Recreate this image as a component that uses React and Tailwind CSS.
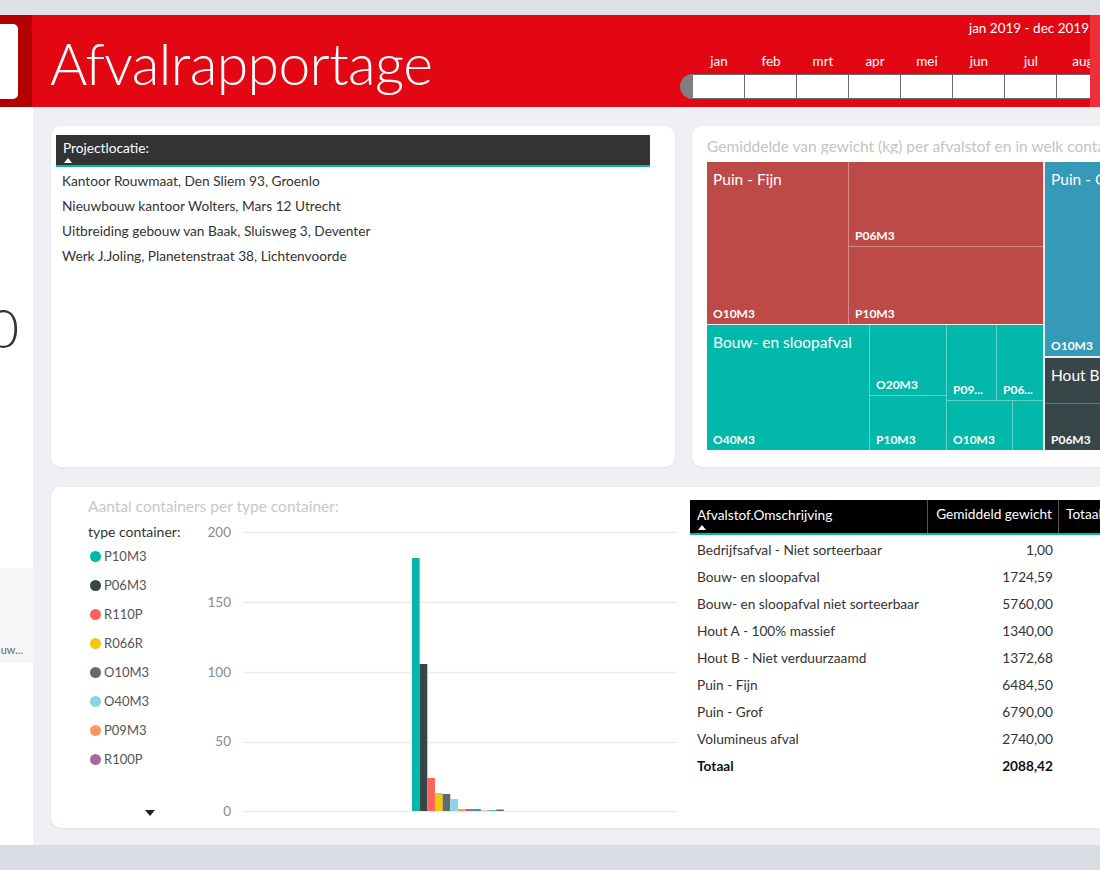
import React from "react";

const months = ["jan", "feb", "mrt", "apr", "mei", "jun", "jul", "aug"];

const locations = [
  "Kantoor Rouwmaat, Den Sliem 93, Groenlo",
  "Nieuwbouw kantoor Wolters, Mars 12 Utrecht",
  "Uitbreiding gebouw van Baak, Sluisweg 3, Deventer",
  "Werk J.Joling, Planetenstraat 38, Lichtenvoorde",
];

const legend = [
  { name: "P10M3", dot: "bg-[#01b8aa]" },
  { name: "P06M3", dot: "bg-[#374649]" },
  { name: "R110P", dot: "bg-[#fd625e]" },
  { name: "R066R", dot: "bg-[#f2c80f]" },
  { name: "O10M3", dot: "bg-[#5f6b6d]" },
  { name: "O40M3", dot: "bg-[#8ad4eb]" },
  { name: "P09M3", dot: "bg-[#fe9666]" },
  { name: "R100P", dot: "bg-[#a66999]" },
];

// bar heights in px (1.4px per container)
const bars = [
  { h: 253, fill: "#01b8aa" },
  { h: 147, fill: "#374649" },
  { h: 33, fill: "#fd625e" },
  { h: 18, fill: "#f2c80f" },
  { h: 17, fill: "#5f6b6d" },
  { h: 12, fill: "#8ad4eb" },
  { h: 2, fill: "#fe9666" },
  { h: 2, fill: "#a66999" },
  { h: 2, fill: "#3599b8" },
  { h: 1, fill: "#dfbfbf" },
  { h: 1, fill: "#4ac5bb" },
  { h: 1.5, fill: "#5f6b6d" },
];

const rows = [
  ["Bedrijfsafval - Niet sorteerbaar", "1,00"],
  ["Bouw- en sloopafval", "1724,59"],
  ["Bouw- en sloopafval niet sorteerbaar", "5760,00"],
  ["Hout A - 100% massief", "1340,00"],
  ["Hout B - Niet verduurzaamd", "1372,68"],
  ["Puin - Fijn", "6484,50"],
  ["Puin - Grof", "6790,00"],
  ["Volumineus afval", "2740,00"],
];

const Cell = ({ className, label, sub }) => (
  <div className={`flex flex-col justify-between overflow-hidden whitespace-nowrap pl-[6px] pt-[8px] pb-[3px] text-white ${className}`}>
    <span className="text-[15.5px] leading-[18px]">{label}</span>
    <span className="text-[12px] font-bold leading-[14px]">{sub}</span>
  </div>
);

const Header = () => (
  <div className="flex h-[92px]">
    <div className="w-[32px] shrink-0 bg-[#b30000] pt-[9px]">
      <div className="w-[18px] h-[75px] bg-white rounded-r-[5px]" />
    </div>
    <div className="flex-1 flex bg-[#e30613] overflow-hidden">
      <div className="flex-1 flex items-center pl-[18px] pt-[5px]">
        <span className="text-[57px] font-light tracking-[-0.6px] text-white leading-none">Afvalrapportage</span>
      </div>
      <div className="w-[410px] shrink-0 flex flex-col overflow-hidden">
        <div className="mt-[5px] h-[16px] leading-[16px] text-right pr-[1px] text-[13.5px] text-white">jan 2019 - dec 2019</div>
        <div className="mt-[17px] h-[16px] flex pl-[13px]">
          {months.map(m => (
            <div key={m} className="w-[52px] shrink-0 text-center text-[13.5px] leading-[16px] text-white">{m}</div>
          ))}
        </div>
        <div className="mt-[5px] h-[25px] flex">
          <div className="w-[13px] shrink-0 bg-[#7f7f7f] rounded-l-full" />
          {months.map(m => (
            <div key={m} className="w-[52px] shrink-0 bg-white border-y-[1.5px] border-r-[1.5px] border-[#6b6b6b]" />
          ))}
        </div>
      </div>
    </div>
    <div className="w-[10px] shrink-0 bg-[#ef2f3a]" />
  </div>
);

const Sidebar = () => (
  <div className="w-[33px] shrink-0 bg-white flex flex-col overflow-hidden">
    <div className="h-[283px] flex justify-end pt-[194px] pr-[14px]">
      <span className="text-[54px] leading-[54px] font-light text-[#333]">0</span>
    </div>
    <div className="h-[178px]" />
    <div className="h-[95px] bg-[#f5f6f8] flex items-end justify-end pr-[10px] pb-[5px]">
      <span className="text-[11px] text-[#666] whitespace-nowrap">uw...</span>
    </div>
    <div className="flex-1" />
  </div>
);

const LocationCard = () => (
  <div className="w-[624px] shrink-0 bg-white rounded-[10px] shadow-[0_1px_3px_rgba(0,0,0,0.06)] pt-[9px]">
    <div className="ml-[5px] w-[594px] h-[32px] bg-[#333] border-b-2 border-[#01b8aa] pl-[7px] pt-[6px] text-white">
      <div className="text-[13.7px] leading-[14px]">Projectlocatie:</div>
      <div className="ml-[1px] mt-[3px] w-0 h-0 border-x-[4px] border-x-transparent border-b-[5px] border-b-white" />
    </div>
    <div className="mt-[1px]">
      {locations.map(l => (
        <div key={l} className="h-[25px] leading-[25px] pl-[11px] text-[13.7px] text-[#333]">{l}</div>
      ))}
    </div>
  </div>
);

const TreemapCard = () => (
  <div className="w-[460px] shrink-0 bg-white rounded-[10px] shadow-[0_1px_3px_rgba(0,0,0,0.06)] pl-[15px] pt-[12px]">
    <div className="h-[16px] leading-[16px] text-[15.5px] text-[#c4c4c4] whitespace-nowrap overflow-hidden">
      Gemiddelde van gewicht (kg) per afvalstof en in welk container
    </div>
    <div className="mt-[8px] flex gap-[2px] h-[288px] bg-[#ececec] w-[440px]">
      <div className="w-[336px] flex flex-col gap-[1px]">
        <div className="h-[162px] flex gap-[1px] bg-[#d7898a]">
          <Cell className="w-[141px] bg-[#be4a47]" label="Puin - Fijn" sub="O10M3" />
          <div className="flex-1 flex flex-col gap-[1px]">
            <Cell className="h-[84px] bg-[#be4a47]" label="" sub="P06M3" />
            <Cell className="flex-1 bg-[#be4a47]" label="" sub="P10M3" />
          </div>
        </div>
        <div className="flex-1 flex gap-[1px] bg-[#5ed3c9]">
          <Cell className="w-[162px] bg-[#01b8aa]" label="Bouw- en sloopafval" sub="O40M3" />
          <div className="w-[76px] flex flex-col gap-[1px]">
            <Cell className="h-[70px] bg-[#01b8aa]" label="" sub="O20M3" />
            <Cell className="flex-1 bg-[#01b8aa]" label="" sub="P10M3" />
          </div>
          <div className="flex-1 flex flex-col gap-[1px]">
            <div className="h-[75px] flex gap-[1px]">
              <Cell className="w-[49px] bg-[#01b8aa]" label="" sub="P09..." />
              <Cell className="flex-1 bg-[#01b8aa]" label="" sub="P06..." />
            </div>
            <div className="flex-1 flex gap-[1px]">
              <Cell className="w-[65px] bg-[#01b8aa]" label="" sub="O10M3" />
              <div className="flex-1 bg-[#01b8aa]" />
            </div>
          </div>
        </div>
      </div>
      <div className="flex-1 flex flex-col gap-[2px]">
        <Cell className="h-[194px] bg-[#3599b8]" label="Puin - Grof" sub="O10M3" />
        <div className="flex-1 flex flex-col gap-[1px] bg-[#6a7577]">
          <Cell className="h-[45px] bg-[#374649]" label="Hout B - Niet" sub="" />
          <Cell className="flex-1 bg-[#374649]" label="" sub="P06M3" />
        </div>
      </div>
    </div>
  </div>
);

const ContainerChart = () => (
  <div className="w-[626px] shrink-0 flex flex-col">
    <div className="pl-[37px] pt-[11px] h-[27px] leading-[16px] text-[15.5px] text-[#c8c8c8] whitespace-nowrap">
      Aantal containers per type container:
    </div>
    <div className="mt-[10px] flex">
      <div className="w-[149px] shrink-0 pl-[37px] flex flex-col">
        <div className="h-[16px] leading-[16px] text-[14px] text-[#333] whitespace-nowrap">type container:</div>
        <div className="mt-[2px]">
          {legend.map(d => (
            <div key={d.name} className="h-[29px] flex items-center">
              <div className={`w-[11px] h-[11px] rounded-full ml-[2px] ${d.dot}`} />
              <span className="ml-[3px] text-[13px] text-[#555]">{d.name}</span>
            </div>
          ))}
        </div>
        <div className="mt-[36px] ml-[57px] w-0 h-0 border-x-[5px] border-x-transparent border-t-[6px] border-t-[#222]" />
      </div>
      <div className="w-[31px] shrink-0 h-[295px] flex flex-col justify-between items-end text-[13.5px] leading-[16px] text-[#8a8a8a]">
        {["200", "150", "100", "50", "0"].map(t => (
          <div key={t}>{t}</div>
        ))}
      </div>
      <svg className="ml-[12px]" width="434" height="295" viewBox="0 0 434 295">
        {[8, 78, 148, 218, 287].map(y => (
          <line key={y} x1="0" x2="434" y1={y + 0.5} y2={y + 0.5} stroke="#ebebeb" strokeWidth="1.5" />
        ))}
        {bars.map((b, i) => (
          <rect key={i} x={169 + i * 7.65} y={287 - b.h} width="7.65" height={b.h} fill={b.fill} />
        ))}
      </svg>
    </div>
  </div>
);

const WeightTable = () => (
  <div className="ml-[13px] pt-[13px] w-[460px] shrink-0">
    <div className="flex h-[35px] bg-black border-b-2 border-[#01b8aa] text-white text-[13.7px] whitespace-nowrap">
      <div className="w-[238px] shrink-0 pl-[7px] pt-[7px] border-r border-[#555]">
        <div className="leading-[15px]">Afvalstof.Omschrijving</div>
        <div className="ml-[1px] mt-[3px] w-0 h-0 border-x-[4px] border-x-transparent border-b-[5px] border-b-white" />
      </div>
      <div className="w-[131px] shrink-0 pr-[6px] pt-[6px] text-right leading-[15px] border-r border-[#555]">Gemiddeld gewicht</div>
      <div className="flex-1 pl-[7px] pt-[6px] leading-[15px]">Totaal gewicht</div>
    </div>
    <div className="mt-[2px] text-[13.7px] text-[#333] whitespace-nowrap">
      {rows.map(([name, value]) => (
        <div key={name} className="flex h-[27px] items-center">
          <div className="w-[238px] shrink-0 pl-[7px]">{name}</div>
          <div className="w-[131px] shrink-0 pr-[6px] text-right">{value}</div>
        </div>
      ))}
      <div className="flex h-[27px] items-center font-bold text-[#111]">
        <div className="w-[238px] shrink-0 pl-[7px]">Totaal</div>
        <div className="w-[131px] shrink-0 pr-[6px] text-right">2088,42</div>
      </div>
    </div>
  </div>
);

export default function App() {
  return (
    <div className="w-[1100px] h-[870px] overflow-hidden bg-[#eef0f4] font-['Lato',sans-serif] flex flex-col">
      <div className="h-[15px] shrink-0 bg-[#dde0e7]" />
      <Header />
      <div className="flex h-[738px] shrink-0">
        <Sidebar />
        <div className="flex-1 overflow-hidden pl-[18px] pt-[19px] flex flex-col">
          <div className="flex gap-[17px] h-[341px] shrink-0">
            <LocationCard />
            <TreemapCard />
          </div>
          <div className="mt-[20px] h-[341px] shrink-0 w-[1100px] flex bg-white rounded-[10px] shadow-[0_1px_3px_rgba(0,0,0,0.06)]">
            <ContainerChart />
            <WeightTable />
          </div>
        </div>
      </div>
      <div className="flex-1 bg-[#d8dce3]" />
    </div>
  );
}
